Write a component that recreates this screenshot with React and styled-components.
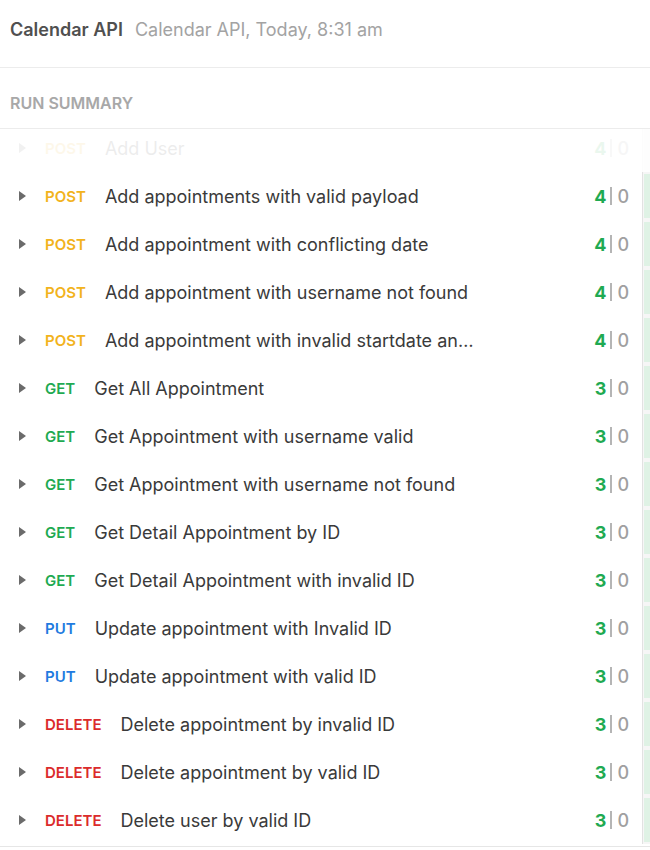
import React from 'react';
import styled, { createGlobalStyle } from 'styled-components';

const GlobalStyle = createGlobalStyle`
  html, body {
    margin: 0;
    padding: 0;
    background: #ffffff;
    font-family: Inter, "Noto Sans", sans-serif;
  }
`;

const METHOD_COLORS = {
  GET: '#1faa52',
  POST: '#f2b31d',
  PUT: '#1f7be0',
  DELETE: '#db2b2b',
};

const requests = [
  { method: 'POST', name: 'Add User', pass: 4, fail: 0, faded: true },
  { method: 'POST', name: 'Add appointments with valid payload', pass: 4, fail: 0 },
  { method: 'POST', name: 'Add appointment with conflicting date', pass: 4, fail: 0 },
  { method: 'POST', name: 'Add appointment with username not found', pass: 4, fail: 0 },
  { method: 'POST', name: 'Add appointment with invalid startdate and enddate', pass: 4, fail: 0 },
  { method: 'GET', name: 'Get All Appointment', pass: 3, fail: 0 },
  { method: 'GET', name: 'Get Appointment with username valid', pass: 3, fail: 0 },
  { method: 'GET', name: 'Get Appointment with username not found', pass: 3, fail: 0 },
  { method: 'GET', name: 'Get Detail Appointment by ID', pass: 3, fail: 0 },
  { method: 'GET', name: 'Get Detail Appointment with invalid ID', pass: 3, fail: 0 },
  { method: 'PUT', name: 'Update appointment with Invalid ID', pass: 3, fail: 0 },
  { method: 'PUT', name: 'Update appointment with valid ID', pass: 3, fail: 0 },
  { method: 'DELETE', name: 'Delete appointment by invalid ID', pass: 3, fail: 0 },
  { method: 'DELETE', name: 'Delete appointment by valid ID', pass: 3, fail: 0 },
  { method: 'DELETE', name: 'Delete user by valid ID', pass: 3, fail: 0 },
];

const Page = styled.div`
  width: 650px;
  height: 850px;
  overflow: hidden;
  background: #ffffff;
`;

const Header = styled.header`
  height: 68px;
  display: flex;
  align-items: center;
  gap: 12px;
  padding: 0 10px 8px;
  box-sizing: border-box;
  border-bottom: 1px solid #ececec;
`;

const Title = styled.h1`
  margin: 0;
  font-size: 18px;
  font-weight: 600;
  color: #505050;
`;

const Subtitle = styled.span`
  font-size: 18px;
  color: #a3a3a3;
`;

const SectionTitle = styled.h2`
  margin: 0;
  height: 61px;
  padding: 25px 10px 0;
  box-sizing: border-box;
  font-size: 16px;
  font-weight: 600;
  color: #a8a8a8;
  border-bottom: 1px solid #ececec;
`;

const List = styled.div`
  height: 717px;
  overflow: hidden;
  border-bottom: 1px solid #e6e6e6;
`;

const Track = styled.div`
  margin-top: -5px;
`;

const Row = styled.div`
  display: flex;
  height: 48px;
  opacity: ${p => (p.faded ? 0.09 : 1)};
`;

const RowBody = styled.div`
  flex: 1;
  display: flex;
  align-items: center;
  padding: 0 13px 0 19px;
  min-width: 0;
`;

const Caret = styled.span`
  width: 0;
  height: 0;
  border-top: 5.5px solid transparent;
  border-bottom: 5.5px solid transparent;
  border-left: 7px solid #6b6b6b;
  margin-right: 19px;
  flex-shrink: 0;
`;

const Method = styled.span`
  font-size: 15px;
  font-weight: 600;
  color: ${p => METHOD_COLORS[p.method]};
  margin-right: 19px;
  flex-shrink: 0;
`;

const Name = styled.span`
  font-size: 18px;
  color: #3a3a3a;
  max-width: 372px;
  white-space: nowrap;
  overflow: hidden;
  text-overflow: ellipsis;
`;

const Counts = styled.div`
  margin-left: auto;
  display: flex;
  align-items: center;
  font-size: 18px;
`;

const Pass = styled.span`
  color: #1faa52;
  font-weight: 700;
`;

const Divider = styled.span`
  width: 2px;
  height: 18px;
  background: #b5b5b5;
  margin: 0 5px 0 4px;
`;

const Fail = styled.span`
  color: #a0a0a0;
  font-weight: 500;
`;

const Strip = styled.div`
  width: 8px;
  border-left: 1px solid #e2e2e2;
  padding: 2px 0 2px 1px;
  box-sizing: border-box;
  background: #f6f6f6;
`;

const StripBar = styled.div`
  height: 100%;
  background: ${p => (p.faded ? '#f1f1f1' : '#dff2e5')};
`;

export default function App() {
  return (
    <Page>
      <GlobalStyle />
      <Header>
        <Title>Calendar API</Title>
        <Subtitle>Calendar API, Today, 8:31 am</Subtitle>
      </Header>
      <SectionTitle>RUN SUMMARY</SectionTitle>
      <List>
        <Track>
          {requests.map(r => (
            <Row key={r.name} faded={r.faded}>
              <RowBody>
                <Caret />
                <Method method={r.method}>{r.method}</Method>
                <Name>{r.name}</Name>
                <Counts>
                  <Pass>{r.pass}</Pass>
                  <Divider />
                  <Fail>{r.fail}</Fail>
                </Counts>
              </RowBody>
              <Strip>
                <StripBar faded={r.faded} />
              </Strip>
            </Row>
          ))}
        </Track>
      </List>
    </Page>
  );
}
